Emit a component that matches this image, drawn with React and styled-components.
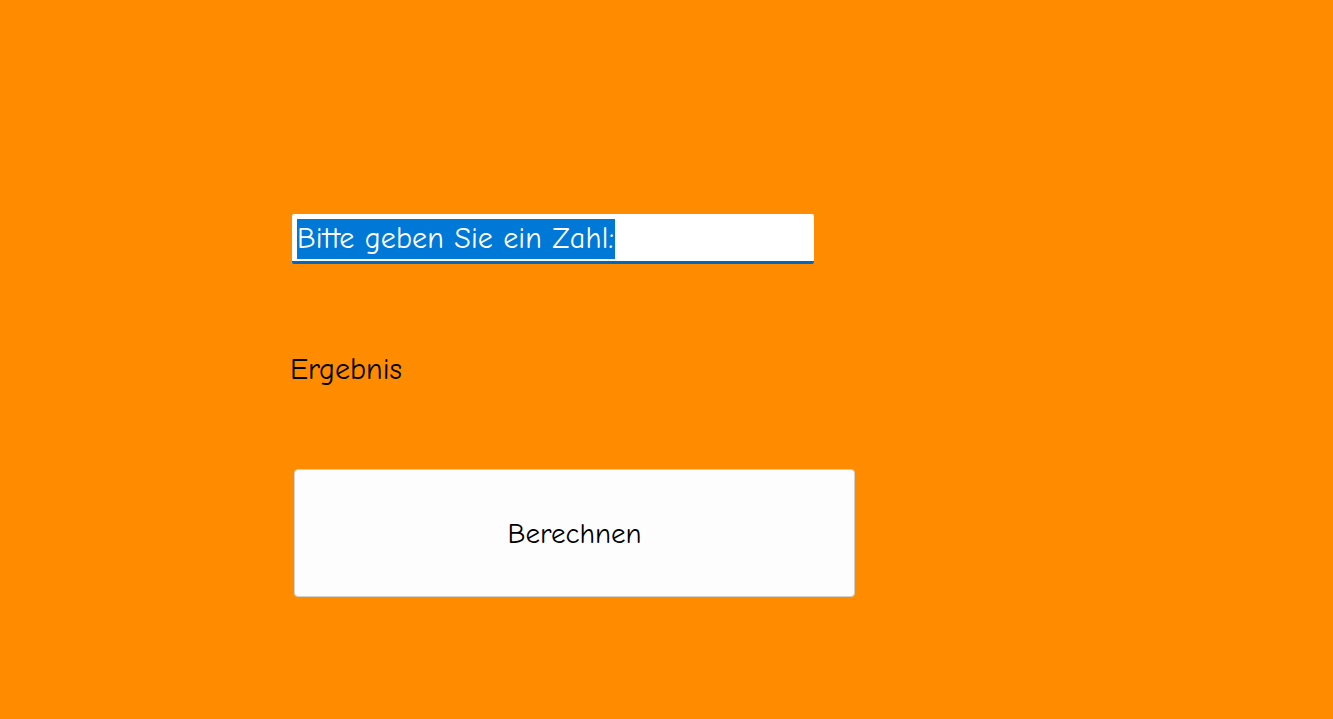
import React from 'react';
import styled, { createGlobalStyle } from 'styled-components';

const GlobalStyle = createGlobalStyle`
  html, body {
    margin: 0;
    padding: 0;
    background: #ff8c00;
  }
  body {
    font-family: "Comic Sans MS", "Comic Neue", "Liberation Sans", sans-serif;
  }
`;

const Page = styled.div`
  width: 1333px;
  height: 719px;
  background: #ff8c00;
  display: flex;
  flex-direction: column;
  align-items: flex-start;
  padding: 214px 0 0 290px;
  box-sizing: border-box;
`;

const InputBox = styled.div`
  width: 522px;
  height: 50px;
  margin-left: 2px;
  box-sizing: border-box;
  background: #fff;
  border-radius: 2px;
  border-bottom: 3px solid #0067c0;
  display: flex;
  align-items: flex-start;
  padding: 5px 5px 0;
`;

const Selected = styled.span`
  background: #0078d7;
  color: #fff;
  font-size: 30px;
  letter-spacing: 0.15px;
  line-height: 40px;
  height: 40px;
  padding-right: 1px;
  white-space: nowrap;
`;

const Label = styled.div`
  margin-top: 86px;
  font-size: 30px;
  line-height: 40px;
  color: #000;
`;

const Button = styled.button`
  margin-top: 79px;
  margin-left: 4px;
  width: 561px;
  height: 128px;
  background: #fdfdfd;
  border: 1px solid #d0d0d0;
  border-radius: 4px;
  font-family: inherit;
  font-size: 29px;
  color: #000;
  cursor: pointer;
`;

export default function App() {
  return (
    <>
      <GlobalStyle />
      <Page>
        <InputBox>
          <Selected>Bitte geben Sie ein Zahl:</Selected>
        </InputBox>
        <Label>Ergebnis</Label>
        <Button>Berechnen</Button>
      </Page>
    </>
  );
}
